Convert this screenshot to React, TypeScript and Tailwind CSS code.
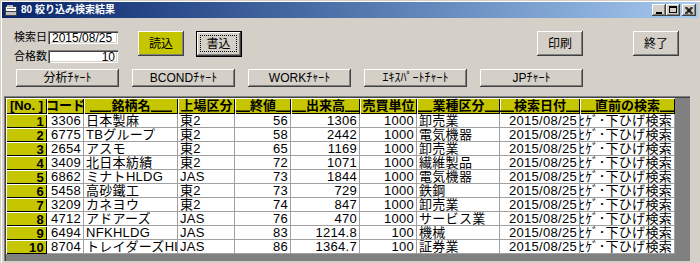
import React from "react";

const raised = "shadow-[inset_-1px_-1px_#404040,inset_1px_1px_#ffffff,inset_-2px_-2px_#808080]";
const sunken = "shadow-[inset_1px_1px_#808080,inset_2px_2px_#404040,inset_-1px_-1px_#ffffff,inset_-2px_-2px_#d4d0c8]";

const FONT = { fontFamily: '"Liberation Sans", "Noto Sans CJK JP", sans-serif' };

type Row = [string, string, string, string, string, string, string];
const rows: Row[] = [
  ["3306", "日本製麻", "東2", "56", "1306", "1000", "卸売業"],
  ["6775", "TBグループ", "東2", "58", "2442", "1000", "電気機器"],
  ["2654", "アスモ", "東2", "65", "1169", "1000", "卸売業"],
  ["3409", "北日本紡績", "東2", "72", "1071", "1000", "繊維製品"],
  ["6862", "ミナトHLDG", "JAS", "73", "1844", "1000", "電気機器"],
  ["5458", "高砂鐵工", "東2", "73", "729", "1000", "鉄鋼"],
  ["3209", "カネヨウ", "東2", "74", "847", "1000", "卸売業"],
  ["4712", "アドアーズ", "JAS", "76", "470", "1000", "サービス業"],
  ["6494", "NFKHLDG", "JAS", "83", "1214.8", "100", "機械"],
  ["8704", "トレイダーズHLDG", "JAS", "86", "1364.7", "100", "証券業"],
];

// [left underscores, label, right underscores, width]
const headers: [string, string, string, string][] = [
  ["", "[No. ]", "", "w-[41px]"],
  ["", "コード", "", "w-[37px]"],
  ["___", "銘柄名", "___", "w-[94px]"],
  ["", "上場区分", "", "w-[57px]"],
  ["__", "終値", "__", "w-[56px]"],
  ["__", "出来高", "__", "w-[69px]"],
  ["", "売買単位", "", "w-[57px]"],
  ["__", "業種区分", "__", "w-[83px]"],
  ["__", "検索日付", "__", "w-[80px]"],
  ["__", "直前の検索", "__", "w-[95px]"],
];

function Cell({ w, right, children, clipLeft }: { w: string; right?: boolean; children: React.ReactNode; clipLeft?: boolean }) {
  return (
    <div
      className={`${w} h-[14px] shrink-0 bg-white border-r border-b border-[#a0a0a0] flex items-center overflow-hidden whitespace-nowrap px-[2px] ${
        right || clipLeft ? "justify-end" : "justify-start"
      }`}
    >
      <span className="shrink-0 leading-[13px]">{children}</span>
    </div>
  );
}

function ChartButton({ label }: { label: string }) {
  return (
    <div className={`w-[103px] h-[18px] bg-[#d4d0c8] ${raised} flex items-center justify-center text-[12px] text-black`}>
      {label}
    </div>
  );
}

function Under({ s }: { s: string }) {
  if (!s) return null;
  return <span className="border-b border-black leading-[12px] inline-block">{s}</span>;
}

export default function App() {
  return (
    <div
      style={FONT}
      className="w-[700px] h-[263px] bg-[#d4d0c8] overflow-hidden flex flex-col p-[2px] shadow-[inset_1px_1px_#d4d0c8,inset_2px_2px_#ffffff]"
    >
      {/* Title bar */}
      <div className="h-[16px] shrink-0 flex items-center bg-linear-to-r from-[#0a246a] to-[#a6caf0] pl-[2px] pr-[2px]">
        <svg width="14" height="13" viewBox="0 0 14 13" className="shrink-0">
          <rect x="1" y="2" width="12" height="10" fill="#404040" />
          <rect x="2" y="3" width="10" height="4" fill="#ffffff" />
          <rect x="3" y="1" width="6" height="2" fill="#c0c0c0" />
          <rect x="2" y="8" width="10" height="3" fill="#c0c0c0" />
          <rect x="3" y="4" width="8" height="1" fill="#808080" />
        </svg>
        <span className="ml-[3px] text-white font-bold text-[10px] leading-[14px]">80 絞り込み検索結果</span>
        <div className="flex-1" />
        <div className="flex items-center">
          <div className={`w-[14px] h-[12px] bg-[#d4d0c8] ${raised} relative`}>
            <div className="absolute left-[4px] top-[8px] w-[6px] h-[2px] bg-black" />
          </div>
          <div className={`w-[14px] h-[12px] bg-[#d4d0c8] ${raised} relative`}>
            <div className="absolute left-[3px] top-[2px] w-[8px] h-[7px] border border-black border-t-2" />
          </div>
          <div className={`ml-[2px] w-[14px] h-[12px] bg-[#d4d0c8] ${raised} flex items-center justify-center`}>
            <svg width="8" height="7" viewBox="0 0 8 7">
              <path d="M0.5 0 L7.5 7 M1.5 0 L7.5 6 M0 0.5 L6.5 7 M7.5 0 L0.5 7 M6.5 0 L0 6.5 M7.5 1 L1.5 7" stroke="black" strokeWidth="1" />
            </svg>
          </div>
        </div>
      </div>

      {/* Top controls */}
      <div className="flex items-start pt-[13px] pl-[12px] shrink-0">
        <div className="flex flex-col gap-[6px]">
          <div className="flex items-center h-[13px]">
            <span className="w-[34px] text-[11px] leading-[13px] text-black">検索日</span>
            <div className={`w-[70px] h-[13px] bg-white ${sunken} flex items-center pl-[4px] text-[12px] leading-[12px] text-black`}>
              2015/08/25
            </div>
          </div>
          <div className="flex items-center h-[13px]">
            <span className="w-[34px] text-[11px] leading-[13px] text-black">合格数</span>
            <div className={`w-[70px] h-[13px] bg-white ${sunken} flex items-center justify-end pr-[3px] text-[12px] leading-[12px] text-black`}>
              10
            </div>
          </div>
        </div>
        <div className={`ml-[20px] w-[46px] h-[25px] bg-[#c6c600] ${raised} flex items-center justify-center text-[12px] text-black`}>
          読込
        </div>
        <div className="ml-[12px] w-[46px] h-[26px] border border-black bg-[#d4d0c8] relative">
          <div className={`absolute inset-0 ${raised}`} />
          <div className="absolute left-[3px] top-[3px] right-[4px] bottom-[4px] border border-dotted border-black flex items-center justify-center text-[12px] text-black">
            書込
          </div>
        </div>
        <div className={`ml-[295px] w-[46px] h-[25px] bg-[#d4d0c8] ${raised} flex items-center justify-center text-[12px] text-black`}>
          印刷
        </div>
        <div className={`ml-[50px] w-[46px] h-[25px] bg-[#d4d0c8] ${raised} flex items-center justify-center text-[12px] text-black`}>
          終了
        </div>
      </div>

      {/* Chart buttons */}
      <div className="flex gap-[13px] pl-[14px] mt-[6px] shrink-0">
        <ChartButton label="分析ﾁｬｰﾄ" />
        <ChartButton label="BCONDﾁｬｰﾄ" />
        <ChartButton label="WORKﾁｬｰﾄ" />
        <ChartButton label="ｴｷｽﾊﾟｰﾄﾁｬｰﾄ" />
        <ChartButton label="JPﾁｬｰﾄ" />
      </div>

      {/* Grid */}
      <div className="mt-[9px] ml-[2px] w-[686px] flex-1 bg-[#808080] border-t border-l border-[#808080] relative">
        <div className="absolute inset-0 border-t border-l border-[#404040] pointer-events-none" />
        <div className="flex flex-col pl-[1px] pt-[1px] text-black">
          <div className="flex">
            {headers.map(([l, h, r, w], i) => (
              <div
                key={i}
                className={`${w} h-[16px] shrink-0 bg-[#c6c600] shadow-[inset_1px_1px_#ffffff,inset_-1px_-1px_#000000] flex items-start justify-center pt-[1px] overflow-hidden whitespace-nowrap text-[13px] font-bold`}
              >
                <Under s={l} />
                <span className="leading-[13px]">{h}</span>
                <Under s={r} />
              </div>
            ))}
          </div>
          {rows.map((r, i) => (
            <div key={i} className="flex text-[13px] tracking-[0.3px]">
              <div className="w-[41px] h-[14px] shrink-0 bg-[#c6c600] shadow-[inset_1px_1px_#ffffff,inset_-1px_-1px_#000000] flex items-center justify-end pr-[3px] font-bold leading-[13px]">
                {i + 1}
              </div>
              <Cell w="w-[37px]" right>{r[0]}</Cell>
              <Cell w="w-[94px]">{r[1]}</Cell>
              <Cell w="w-[57px]">{r[2]}</Cell>
              <Cell w="w-[56px]" right>{r[3]}</Cell>
              <Cell w="w-[69px]" right>{r[4]}</Cell>
              <Cell w="w-[57px]" right>{r[5]}</Cell>
              <Cell w="w-[83px]">{r[6]}</Cell>
              <Cell w="w-[80px]" right>2015/08/25</Cell>
              <Cell w="w-[95px]" clipLeft>ﾋｹﾞ･下ひげ検索</Cell>
            </div>
          ))}
        </div>
      </div>
    </div>
  );
}
